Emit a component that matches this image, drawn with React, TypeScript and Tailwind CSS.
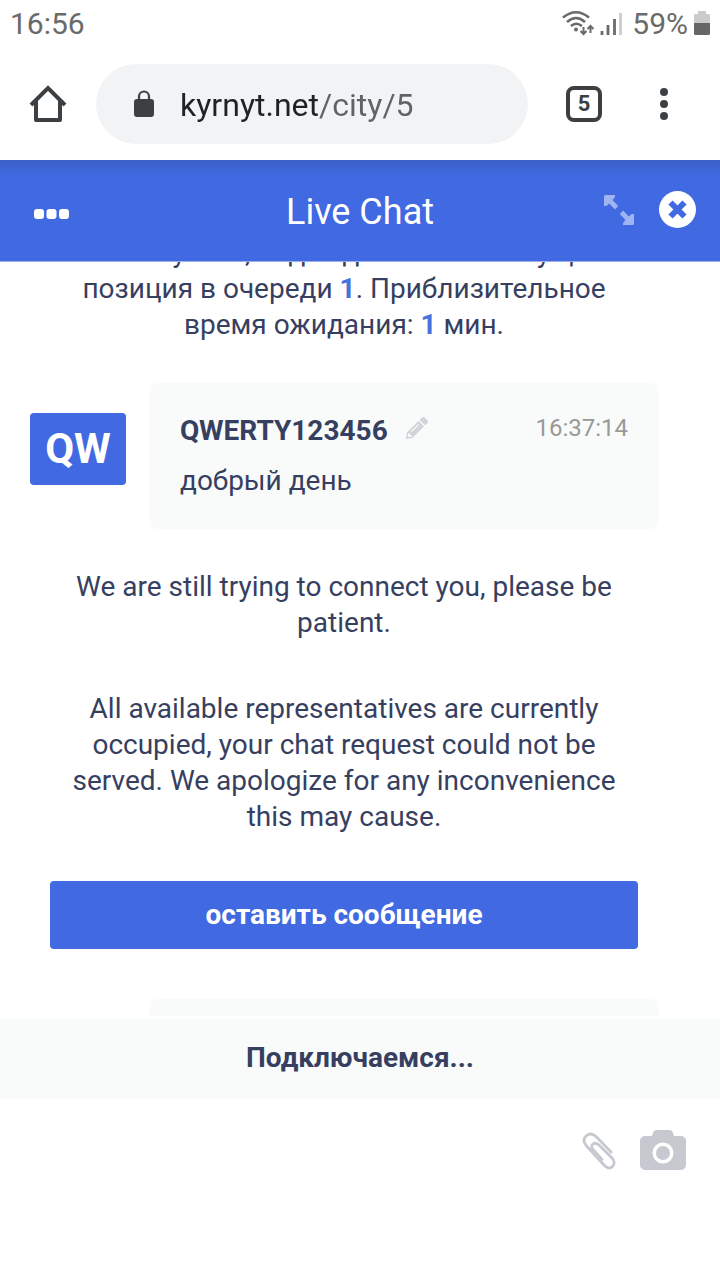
import React, { useState } from "react";
import { FaPencilAlt } from "react-icons/fa";

const StatusBar: React.FC = () => (
  <div className="h-12 px-2.5 flex items-center justify-between text-[#6a6a6a] text-[30px] leading-9">
    <span>16:56</span>
    <div className="flex items-center">
      <svg width="60" height="28" viewBox="0 0 60 28" className="mr-2.5" fill="none" stroke="#6a6a6a">
        <path d="M1 7.5Q14 -3 27 7.5" strokeWidth="2.6" />
        <path d="M5 12Q14 4 23 12" strokeWidth="2.6" />
        <path d="M9 16Q14 11.5 20 16" strokeWidth="2.6" />
        <circle cx="14" cy="19.5" r="2" fill="#6a6a6a" stroke="none" />
        <path d="M21.5 17v7M18.5 21l3 3 3-3M28.5 23v-7M25.5 19l3-3 3 3" strokeWidth="2" />
        <path d="M40 21v4M46 15v10M52.5 9v16" strokeWidth="2.8" />
        <path d="M58.5 3v22" stroke="#cbcbcb" strokeWidth="2.8" />
      </svg>
      <span>59%</span>
      <svg width="16" height="26" viewBox="0 0 16 26" className="ml-1.5">
        <path d="M4 0h8v3h2.5a1.5 1.5 0 0 1 1.5 1.5V12H0V4.5A1.5 1.5 0 0 1 1.5 3H4z" fill="#cbcbcb" />
        <path d="M0 12h16v10.5a1.5 1.5 0 0 1-1.5 1.5h-13A1.5 1.5 0 0 1 0 22.5z" fill="#666" />
      </svg>
    </div>
  </div>
);

const AddressBar: React.FC = () => {
  const [url, setUrl] = useState("kyrnyt.net/city/5");

  return (
    <div className="h-28 py-4 pl-7 pr-[46px] flex items-center">
      <button aria-label="Home">
        <svg width="40" height="40" viewBox="0 0 40 40" fill="none" stroke="#3c4043" strokeWidth="4">
          <path d="M3 21L20 4l17 17" />
          <path d="M8 17v19h24V17" strokeLinejoin="round" />
        </svg>
      </button>
      <div className="ml-7 flex-1 min-w-0 h-20 rounded-full bg-[#f1f3f4] flex items-center pl-[38px] pr-6">
        <svg width="20" height="28" viewBox="0 0 20 28" className="mr-[26px] shrink-0">
          <path d="M5 10V6.5a5 5 0 0 1 10 0V10" fill="none" stroke="#3c4043" strokeWidth="2.2" />
          <rect y="9" width="20" height="18" rx="3" fill="#3c4043" />
        </svg>
        {/* host is dark, path is grey */}
        <input
          type="text"
          aria-label="Address"
          value={url}
          onChange={(e) => setUrl(e.target.value)}
          className="flex-1 min-w-0 pt-0.5 text-[32px] leading-10 outline-none text-transparent bg-clip-text bg-linear-to-r from-[#202124] from-[139px] to-[#5f6368] to-[139px]"
        />
      </div>
      <button
        aria-label="Tabs"
        className="ml-[38px] w-9 h-9 rounded-lg border-4 border-[#3c4043] flex items-center justify-center text-[#3c4043] text-[22px] leading-7 font-bold"
      >
        5
      </button>
      <button aria-label="Menu" className="ml-[52px]">
        <svg width="20" height="36" viewBox="0 0 20 36" fill="#3c4043">
          <circle cx="10" cy="6" r="4" />
          <circle cx="10" cy="18" r="4" />
          <circle cx="10" cy="30" r="4" />
        </svg>
      </button>
    </div>
  );
};

const ARROW = "M0 1.5Q0 0 1.5 0H11V2L8.500 5 14.200 11 11 14.500 5.200 8.500 2.500 11H0Z";

const ChatHeader: React.FC = () => (
  <header className="h-[102px] px-6 grid grid-cols-[1fr_auto_1fr] items-center bg-linear-to-b from-[#3d60c6] to-[#4069e2] to-15% border-b border-[#9db1ef] text-white">
    <button aria-label="Options" className="justify-self-start pl-2.5 pt-1.5">
      <svg width="35" height="10" viewBox="0 0 35 10" fill="white">
        <rect width="10" height="10" rx="3" />
        <rect x="12.5" width="10" height="10" rx="3" />
        <rect x="25" width="10" height="10" rx="3" />
      </svg>
    </button>
    <h1 className="pt-0.5 text-[36px] leading-10">Live Chat</h1>
    <div className="justify-self-end pb-0.5 flex items-center gap-6">
      <button aria-label="Expand">
        <svg width="30" height="30" viewBox="0 0 30 30" fill="#a0b4f1">
          <path d={ARROW} />
          <path d={ARROW} transform="rotate(180 15 15)" />
        </svg>
      </button>
      <button aria-label="Close">
        <svg width="38" height="38" viewBox="0 0 38 38">
          <circle cx="19.5" cy="18.5" r="18.5" fill="white" />
          <path d="M12.5 11.5l14 14M26.5 11.5l-14 14" stroke="#4069e2" strokeWidth="6" />
        </svg>
      </button>
    </div>
  </header>
);

const SystemMessage: React.FC<{ children: React.ReactNode }> = ({ children }) => (
  <p className="px-5 text-center">{children}</p>
);

const App: React.FC = () => {
  return (
    <div className="h-screen flex flex-col bg-white font-['Roboto',sans-serif]">
      <StatusBar />
      <AddressBar />
      <ChatHeader />

      <main className="flex-1 min-h-0 overflow-hidden pl-[30px] pr-[62px] text-[28px] leading-9 text-[#373f61]">
        {/* history is scrolled, so the first line is partly under the header */}
        <div className="-mt-[27px]">
          <SystemMessage>
            Пожалуйста, подождите. Ваша текущая позиция в очереди{" "}
            <b className="text-[#4a72dd]">1</b>. Приблизительное время ожидания:{" "}
            <b className="text-[#4a72dd]">1</b> мин.
          </SystemMessage>

          <div className="mt-10 flex items-start gap-6">
            <div className="mt-[30px] w-24 h-[72px] rounded bg-[#4069e2] flex items-center justify-center text-white text-[42px] leading-[48px] font-bold">
              QW
            </div>
            <div className="flex-1 p-[30px] rounded-md bg-[#f9fbfa]">
              <div className="flex items-center">
                <span className="font-bold">QWERTY123456</span>
                <button aria-label="Edit name" className="ml-[18px] pb-1.5 text-[#d3d4da]">
                  <FaPencilAlt size={22} />
                </button>
                <time className="ml-auto pb-1.5 text-[24px] leading-[30px] text-[#999]">
                  16:37:14
                </time>
              </div>
              <p className="mt-3.5">добрый день</p>
            </div>
          </div>

          <div className="mt-10 flex flex-col gap-[50px]">
            <SystemMessage>We are still trying to connect you, please be patient.</SystemMessage>
            <SystemMessage>
              All available representatives are currently occupied, your chat request could not be
              served. We apologize for any inconvenience this may cause.
            </SystemMessage>
          </div>

          <div className="mt-[46px] px-5">
            <button className="w-full h-[68px] rounded bg-[#4069e2] text-white font-bold">
              оставить сообщение
            </button>
          </div>

          <div className="mt-[50px] ml-[120px] h-36 rounded-md bg-[#f9fbfa]" />
        </div>
      </main>

      <div className="mt-0.5 h-20 shrink-0 flex items-center justify-center bg-[#f9fbfa] text-[28px] leading-9 font-bold text-[#373f61]">
        Подключаемся...
      </div>

      <footer className="h-[182px] shrink-0 pt-8 pr-[34px] flex items-start justify-end gap-[22px]">
        <button aria-label="Attach file">
          <svg width="36" height="42" viewBox="0 0 36 42" fill="none" stroke="#c7c9d1" strokeWidth="2.8" strokeLinecap="round">
            <path d="M29 22L15 7.5C11 3.500 7 3 4 6s-2.500 7 1 10.500l17 18.500c3 3.500 6 4 8.500 1.500s2-6-1-9L17.500 15.500c-2.500-2.500-4.500-3-6.500-1.500s-1.500 4 .5 6l8.500 9.500" />
          </svg>
        </button>
        <button aria-label="Send photo">
          <svg width="46" height="40" viewBox="0 0 46 40">
            <path
              d="M17 0h12c2.500 0 3.500 1 4 3 .5 2.500 1 3 3 3h5a5 5 0 0 1 5 5v24a5 5 0 0 1-5 5H5a5 5 0 0 1-5-5V11a5 5 0 0 1 5-5h5c2 0 2.500-.5 3-3 .5-2 1.500-3 4-3z"
              fill="#c7c9d1"
            />
            <circle cx="23" cy="23" r="8.75" fill="none" stroke="white" strokeWidth="3.5" />
          </svg>
        </button>
      </footer>
    </div>
  );
};

export default App;
